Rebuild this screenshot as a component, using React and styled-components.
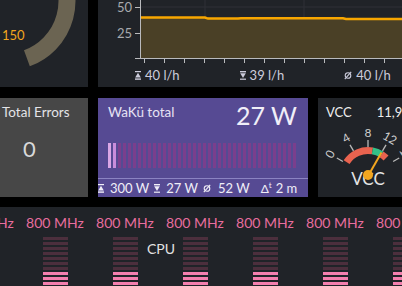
import React from 'react';
import styled, { createGlobalStyle } from 'styled-components';

const GlobalStyle = createGlobalStyle`
  html, body {
    margin: 0;
    padding: 0;
    background: #000;
  }
  body {
    width: 402px;
    height: 286px;
    overflow: hidden;
    font-family: Lato, "Liberation Sans", sans-serif;
  }
`;

const Dashboard = styled.div`
  display: grid;
  grid-template-columns: 88px 210px 104px;
  grid-template-rows: 88px 99px 100px;
  column-gap: 10px;
  row-gap: 10px;
  width: 422px;
`;

const Panel = styled.div`
  position: relative;
  overflow: hidden;
  background: ${(p) => p.$bg || '#202328'};
  color: #d8d9da;
  height: ${(p) => p.$h || '100%'};
  grid-column: ${(p) => p.$span || 'auto'};
`;

/* ---------- top left gauge ---------- */
const GaugeSvg = styled.svg`
  display: block;
`;

/* ---------- flow chart ---------- */
const Legend = styled.div`
  display: flex;
  align-items: center;
  gap: ${(p) => p.$gap || 60}px;
  padding-left: ${(p) => p.$pad || 0}px;
  height: 18px;
  font-size: ${(p) => p.$size || 13}px;
  color: ${(p) => p.$color || '#ccccdc'};
  white-space: nowrap;
`;

const LegendItem = styled.span`
  display: inline-flex;
  align-items: center;
  gap: ${(p) => p.$gap || 4}px;
  margin-left: ${(p) => p.$ml || 0}px;
`;

const Delta = styled.span`
  font-size: 12px;
  sup {
    font-size: 8px;
    vertical-align: 5px;
  }
`;

/* ---------- stat panels ---------- */
const Title = styled.div`
  font-size: 13.5px;
  line-height: 16px;
  color: #e4e4e8;
  white-space: nowrap;
`;

const ErrorsBody = styled.div`
  padding: 6px 0 0 2px;
`;

const BigNumber = styled.div`
  width: 55px;
  margin-top: 18px;
  text-align: center;
  font-size: 22px;
  line-height: 22px;
  color: #d8d9da;
`;

const PurpleBody = styled.div`
  padding: 5px 11px 0 10px;
`;

const HeaderRow = styled.div`
  display: flex;
  justify-content: space-between;
  align-items: flex-start;
`;

const PurpleTitle = styled(Title)`
  margin-top: 1px;
  color: #e6e2f4;
`;

const PurpleValue = styled.div`
  font-size: 25px;
  line-height: 25px;
  color: #f0eef8;
`;

const BarRow = styled.div`
  display: flex;
  gap: 2px;
  height: 25px;
  margin-top: 15px;
`;

const Bar = styled.div`
  width: 3px;
  background: ${(p) => p.$color};
`;

const Separator = styled.div`
  height: 1px;
  margin-top: 10px;
  background: #8b83c2;
`;

const VccHeader = styled.div`
  display: flex;
  justify-content: space-between;
  padding: 6px 8px;
  font-size: 13px;
  line-height: 16px;
  color: #eeeeee;
  white-space: nowrap;
`;

const VccSvg = styled.svg`
  display: block;
  overflow: visible;
`;

/* ---------- cpu ---------- */
const CpuRow = styled.div`
  display: flex;
  margin-left: -50px;
  padding-top: 7px;
`;

const CpuCell = styled.div`
  width: 70px;
  flex: none;
  display: flex;
  flex-direction: column;
  align-items: center;
`;

const MhzLabel = styled.div`
  font-size: 14px;
  line-height: 18px;
  color: #e86d9e;
  white-space: nowrap;
`;

const Leds = styled.div`
  display: flex;
  flex-direction: column;
  gap: 2px;
  width: 25px;
  margin-top: 5px;
`;

const Led = styled.div`
  height: 3px;
  background: ${(p) => (p.$on ? '#f37fae' : '#4c2f3d')};
`;

const CpuTitle = styled.div`
  position: absolute;
  left: 147px;
  top: 33px;
  font-size: 14px;
  line-height: 18px;
  color: #e2e2e2;
`;

/* ---------- icons ---------- */
const MaxIcon = () => (
  <svg width="6" height="9" viewBox="0 0 6 9" fill="currentColor">
    <rect x="0" y="0" width="6" height="1.2" />
    <path d="M3 1.8 L5.8 6.6 H0.2 Z" />
    <rect x="0" y="7.4" width="6" height="1.4" />
  </svg>
);

const MinIcon = () => (
  <svg width="6" height="9" viewBox="0 0 6 9" fill="currentColor">
    <rect x="0" y="0" width="6" height="1.4" />
    <path d="M0.2 2.2 H5.8 L3 7 Z" />
    <rect x="0" y="7.6" width="6" height="1.2" />
  </svg>
);

const AvgIcon = () => (
  <svg width="8" height="9" viewBox="0 0 8 9" fill="none" stroke="currentColor" strokeWidth="1.1">
    <circle cx="4" cy="4.5" r="2.8" />
    <path d="M7.2 0.8 L0.8 8.2" />
  </svg>
);

const polar = (cx, cy, r, deg) => {
  const a = (deg * Math.PI) / 180;
  return [cx + r * Math.sin(a), cy - r * Math.cos(a)];
};

const arc = (cx, cy, r, a0, a1) => {
  const [x0, y0] = polar(cx, cy, r, a0);
  const [x1, y1] = polar(cx, cy, r, a1);
  return `M${x0} ${y0} A${r} ${r} 0 0 1 ${x1} ${y1}`;
};

const VccGauge = () => {
  const cx = 50;
  const cy = 50;
  const labels = [
    ['0', -60],
    ['4', -30],
    ['8', 0],
    ['12', 30],
    ['16', 60],
  ];
  const [nx, ny] = polar(cx, cy, 27, 30);
  return (
    <VccSvg width="104" height="72">
      <path d={arc(cx, cy, 25.5, -57, 10)} stroke="#e9634f" strokeWidth="7" fill="none" />
      <path d={arc(cx, cy, 25.5, 10, 32)} stroke="#33c088" strokeWidth="7" fill="none" />
      <path d={arc(cx, cy, 25.5, 32, 45)} stroke="#e9634f" strokeWidth="7" fill="none" />
      {labels.map(([t, a]) => {
        const [x0, y0] = polar(cx, cy, 29, a);
        const [x1, y1] = polar(cx, cy, 36, a);
        const [lx, ly] = polar(cx, cy, 44, a);
        return (
          <g key={t}>
            <line x1={x0} y1={y0} x2={x1} y2={y1} stroke="#b8b8b8" strokeWidth="1.3" />
            <text
              x={lx}
              y={ly}
              fill="#cfcfcf"
              fontSize="12"
              textAnchor="middle"
              dominantBaseline="central"
              transform={`rotate(${a} ${lx} ${ly})`}
            >
              {t}
            </text>
          </g>
        );
      })}
      <text x={cx} y="59" fill="#e4e4e4" fontSize="17" textAnchor="middle">
        VCC
      </text>
      <line x1={cx} y1={cy} x2={nx} y2={ny} stroke="#f2a61f" strokeWidth="2" />
      <circle cx={cx} cy={cy - 1} r="5" fill="#f2a61f" />
    </VccSvg>
  );
};

const FlowChart = () => {
  const ticks = Array.from({ length: 15 }, (_, i) => 46 + i * 20);
  const line = '42,17.6 107,17.6 110,18.6 140,18.6 143,18.3 245,18.3 248,18.9 330,18.9';
  return (
    <svg width="330" height="66" style={{ display: 'block' }}>
      {[7, 33].map((y) => (
        <line key={y} x1="42" y1={y} x2="330" y2={y} stroke="#2e3136" />
      ))}
      {[107, 206, 305].map((x) => (
        <line key={x} x1={x} y1="0" x2={x} y2="58" stroke="#2e3136" />
      ))}
      <path d={`M${line.split(' ').join(' L')} L330 58 L42 58 Z`} fill="#4a4026" />
      <polyline points={line} fill="none" stroke="#f7a600" strokeWidth="2.5" />
      <line x1="42.5" y1="0" x2="42.5" y2="58.5" stroke="#b9babd" />
      <line x1="37" y1="58.5" x2="330" y2="58.5" stroke="#b9babd" />
      {[7, 33].map((y) => (
        <line key={y} x1="37" y1={y + 0.5} x2="42" y2={y + 0.5} stroke="#b9babd" />
      ))}
      {ticks.map((x) => (
        <line key={x} x1={x + 0.5} y1="58" x2={x + 0.5} y2="63" stroke="#b9babd" />
      ))}
      <text x="34" y="12" fill="#a8aaae" fontSize="13" textAnchor="end">50</text>
      <text x="34" y="38" fill="#a8aaae" fontSize="13" textAnchor="end">25</text>
    </svg>
  );
};

const TopGauge = () => (
  <GaugeSvg width="88" height="87">
    <path d="M52.7 -38.2 A61 61 0 0 1 26.9 58.3" stroke="#6b6452" strokeWidth="17" fill="none" />
    <text x="2" y="40" fill="#f2a51e" fontSize="13">150</text>
  </GaugeSvg>
);

const bars = Array.from({ length: 38 }, (_, i) => {
  if (i === 0) return '#dba7e6';
  if (i === 1) return '#c98ddb';
  return '#7a3f8d';
});

const cpus = Array.from({ length: 7 }, (_, i) => i);
const leds = Array.from({ length: 14 }, (_, i) => i >= 7);

const App = () => (
  <>
    <GlobalStyle />
    <Dashboard>
      <Panel $h="87px">
        <TopGauge />
      </Panel>
      <Panel $h="87px" $span="2 / 4">
        <FlowChart />
        <Legend $pad={37} $gap={60}>
          <LegendItem>
            <MaxIcon />
            40 l/h
          </LegendItem>
          <LegendItem>
            <MinIcon />
            39 l/h
          </LegendItem>
          <LegendItem>
            <AvgIcon />
            40 l/h
          </LegendItem>
        </Legend>
      </Panel>

      <Panel $bg="#474747">
        <ErrorsBody>
          <Title>Total Errors</Title>
          <BigNumber>0</BigNumber>
        </ErrorsBody>
      </Panel>
      <Panel $bg="#564a93">
        <PurpleBody>
          <HeaderRow>
            <PurpleTitle>WaKü total</PurpleTitle>
            <PurpleValue>27 W</PurpleValue>
          </HeaderRow>
          <BarRow>
            {bars.map((c, i) => (
              <Bar key={i} $color={c} />
            ))}
          </BarRow>
        </PurpleBody>
        <Separator />
        <Legend $gap={5} $size={13} $color="#f0eef8">
          <LegendItem $gap={6}>
            <MaxIcon />
            300 W
          </LegendItem>
          <LegendItem $gap={6}>
            <MinIcon />
            27 W
          </LegendItem>
          <LegendItem $gap={7}>
            <AvgIcon />
            52 W
          </LegendItem>
          <LegendItem $gap={4} $ml={6}>
            <Delta>
              Δ<sup>t</sup>
            </Delta>
            2 m
          </LegendItem>
        </Legend>
      </Panel>
      <Panel>
        <VccHeader>
          <span>VCC</span>
          <span>11,9 V</span>
        </VccHeader>
        <VccGauge />
      </Panel>

      <Panel $span="1 / 4">
        <CpuRow>
          {cpus.map((i) => (
            <CpuCell key={i}>
              <MhzLabel>800 MHz</MhzLabel>
              <Leds>
                {leds.map((on, j) => (
                  <Led key={j} $on={on} />
                ))}
              </Leds>
            </CpuCell>
          ))}
        </CpuRow>
        <CpuTitle>CPU</CpuTitle>
      </Panel>
    </Dashboard>
  </>
);

export default App;
